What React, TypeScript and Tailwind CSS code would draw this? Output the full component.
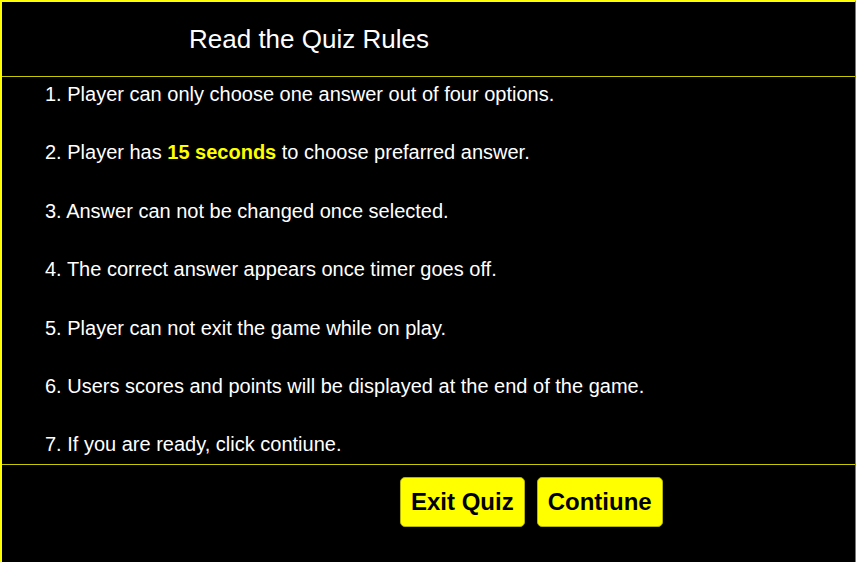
const rules: React.ReactNode[] = [
  "1. Player can only choose one answer out of four options.",
  <>
    2. Player has <span className="font-bold text-[#ffff00]">15 seconds</span> to choose prefarred answer.
  </>,
  "3. Answer can not be changed once selected.",
  "4. The correct answer appears once timer goes off.",
  "5. Player can not exit the game while on play.",
  "6. Users scores and points will be displayed at the end of the game.",
  "7. If you are ready, click contiune.",
];

export default function App() {
  return (
    <div className="h-[562px] w-[856px] overflow-hidden bg-black font-['Liberation_Sans',Arial,sans-serif] text-white">
      <div className="h-full border-l-2 border-t-2 border-r border-l-[#ffff00] border-t-[#ffff00] border-r-[#8a8a00]">
        {/* header */}
        <div className="flex h-[75px] items-center border-b border-[#c8c800] pl-[187px]">
          <h1 className="text-[26px] leading-[30px]">Read the Quiz Rules</h1>
        </div>

        {/* rules */}
        <div className="flex h-[388px] flex-col gap-[36.4px] border-b border-[#c8c800] pl-[43px] pt-[6px]">
          {rules.map((r, i) => (
            <div key={i} className="h-[22px] text-[20px] leading-[22px]">
              {r}
            </div>
          ))}
        </div>

        {/* buttons */}
        <div className="flex gap-[12px] pl-[398px] pt-[12px]">
          <button className="rounded-[5px] border border-[#b3b300] bg-[#ffff00] px-[10px] py-[10px] text-[24px] font-bold leading-[28px] text-black">
            Exit Quiz
          </button>
          <button className="rounded-[5px] border border-[#b3b300] bg-[#ffff00] px-[10px] py-[10px] text-[24px] font-bold leading-[28px] text-black">
            Contiune
          </button>
        </div>
      </div>
    </div>
  );
}
